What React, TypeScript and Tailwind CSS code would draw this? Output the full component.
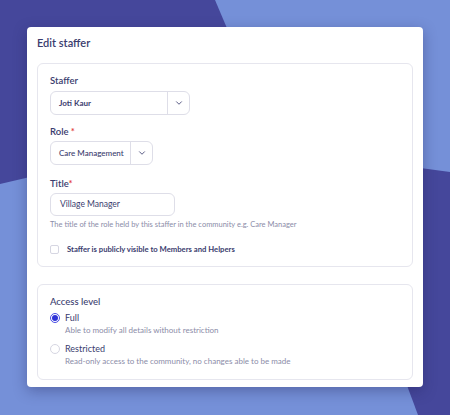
import { ChevronDown } from "lucide-react";

function SelectBox({ value, width, bold }: { value: string; width: string; bold?: boolean }) {
  return (
    <div className={`flex h-[24px] ${width} items-stretch rounded-[6px] border border-[#dedee8] bg-white`}>
      <div className={`flex flex-1 items-center whitespace-nowrap pl-[8px] text-[8px] text-[#3a3c6e] ${bold ? "font-bold" : "font-medium"}`}>
        {value}
      </div>
      <div className="flex w-[22px] items-center justify-center border-l border-[#dedee8]">
        <ChevronDown className="h-[10px] w-[10px] text-[#3a3c6e]" strokeWidth={2} />
      </div>
    </div>
  );
}

function Radio({ checked }: { checked?: boolean }) {
  return checked ? (
    <span className="flex h-[10px] w-[10px] items-center justify-center rounded-full border border-[#4a4ee6] bg-white">
      <span className="h-[6px] w-[6px] rounded-full bg-[#2f33d6]" />
    </span>
  ) : (
    <span className="h-[10px] w-[10px] rounded-full border border-[#d6d6e2] bg-white" />
  );
}

export default function App() {
  return (
    <div
      className="relative h-[415px] w-[450px] overflow-hidden bg-[#7590d8]"
      style={{ fontFamily: "Lato, 'Noto Sans', sans-serif" }}
    >
      <svg className="absolute inset-0" width="450" height="415" viewBox="0 0 450 415">
        <polygon points="0,0 215,0 232,40 60,170 0,184" fill="#45479b" />
        <polygon points="413,167 450,172 450,415 418,415 405,380" fill="#45479b" />
      </svg>

      <div className="relative pl-[27px] pt-[27px]">
        <div className="w-[396px] rounded-[4px] bg-white px-[10px] pb-[7px] pt-[9px] shadow-[0_4px_14px_rgba(30,30,80,0.35)]">
          <h1 className="text-[11px] font-semibold leading-[14px] text-[#3a3c6e]">Edit staffer</h1>

          <div className="mt-[13px] rounded-[6px] border border-[#e6e6ee] px-[12px] pb-[11px] pt-[11px]">
            <div className="text-[9.5px] font-semibold leading-[12px] text-[#3a3c6e]">Staffer</div>
            <div className="mt-[4px]">
              <SelectBox value="Joti Kaur" width="w-[140px]" bold />
            </div>

            <div className="mt-[11px] text-[9.5px] font-semibold leading-[12px] text-[#3a3c6e]">
              Role <span className="text-[#e23b3b]">*</span>
            </div>
            <div className="mt-[3px]">
              <SelectBox value="Care Management" width="w-[103px]" />
            </div>

            <div className="mt-[13px] text-[9.5px] font-semibold leading-[12px] text-[#3a3c6e]">
              Title<span className="text-[#e23b3b]">*</span>
            </div>
            <div className="mt-[3px] flex h-[23px] w-[125px] items-center rounded-[6px] border border-[#dedee8] pl-[9px] text-[8.5px] text-[#3a3c6e]">
              Village Manager
            </div>
            <p className="mt-[3px] text-[7.5px] leading-[12px] text-[#8b8ca8]">
              The title of the role held by this staffer in the community e.g. Care Manager
            </p>

            <div className="mt-[12px] flex items-center gap-[8px]">
              <span className="h-[9px] w-[9px] rounded-[2px] border border-[#d6d6e2] bg-white" />
              <span className="text-[7.7px] font-bold leading-[12px] text-[#3a3c6e]">
                Staffer is publicly visible to Members and Helpers
              </span>
            </div>
          </div>

          <div className="mt-[17px] rounded-[6px] border border-[#e6e6ee] px-[12px] pb-[12px] pt-[11px]">
            <div className="text-[9.5px] font-medium leading-[12px] text-[#3a3c6e]">Access level</div>
            <div className="mt-[4px] flex items-center gap-[5px]">
              <Radio checked />
              <span className="text-[9px] leading-[12px] text-[#3a3c6e]">Full</span>
            </div>
            <p className="pl-[15px] text-[8px] leading-[12px] text-[#8b8ca8]">
              Able to modify all details without restriction
            </p>
            <div className="mt-[7px] flex items-center gap-[5px]">
              <Radio />
              <span className="text-[9px] leading-[12px] text-[#3a3c6e]">Restricted</span>
            </div>
            <p className="pl-[15px] text-[8px] leading-[12px] text-[#8b8ca8]">
              Read-only access to the community, no changes able to be made
            </p>
          </div>
        </div>
      </div>
    </div>
  );
}
